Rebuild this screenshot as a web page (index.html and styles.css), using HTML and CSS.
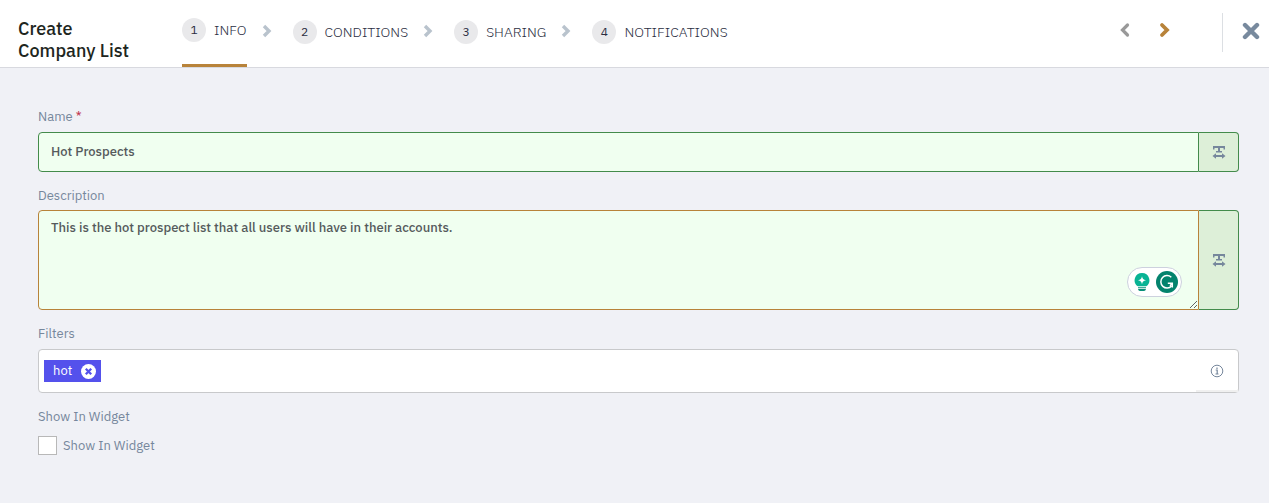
FILE: index.html
```html
<!DOCTYPE html>
<html lang="en">
<head>
<meta charset="utf-8">
<meta name="viewport" content="width=device-width, initial-scale=1">
<title>Create Company List</title>
<link rel="stylesheet" href="styles.css">
</head>
<body>
<svg class="sprite" aria-hidden="true">
  <symbol id="chevron" viewBox="0 0 10 14"><path d="M2 2l5 5-5 5" fill="none" stroke="currentColor" stroke-width="3.4"/></symbol>
  <symbol id="text-width" viewBox="0 0 14 14"><path fill="currentColor" d="M1 1h12v3.500h-1.500V3H8v3h2v1.500H4V6h2V3H2.500v1.500H1zM.5 11L4 8.300V10h6V8.300L13.500 11 10 13.700V12H4v1.700z"/></symbol>
</svg>
<header class="header">
  <h1 class="title">Create Company List</h1>
  <nav class="steps" aria-label="Steps">
    <button class="step step-active" type="button"><span class="num">1</span><span>INFO</span></button>
    <svg class="sep"><use href="#chevron"/></svg>
    <button class="step" type="button"><span class="num">2</span><span>CONDITIONS</span></button>
    <svg class="sep"><use href="#chevron"/></svg>
    <button class="step" type="button"><span class="num">3</span><span>SHARING</span></button>
    <svg class="sep"><use href="#chevron"/></svg>
    <button class="step" type="button"><span class="num">4</span><span>NOTIFICATIONS</span></button>
  </nav>
  <div class="actions">
    <button class="nav-button prev" type="button" aria-label="Previous"><svg width="12" height="16" viewBox="0 0 12 16"><path d="M8.500 3L3.500 8l5 5" fill="none" stroke="currentColor" stroke-width="3.200" stroke-linecap="round"/></svg></button>
    <button class="nav-button next" type="button" aria-label="Next"><svg width="12" height="16" viewBox="0 0 12 16"><path d="M3 3l5 5-5 5" fill="none" stroke="currentColor" stroke-width="3.800" stroke-linecap="round"/></svg></button>
    <button class="close" type="button" aria-label="Close"><svg width="18" height="18" viewBox="0 0 18 18"><path d="M3 3l12 12M15 3L3 15" fill="none" stroke="currentColor" stroke-width="4.400" stroke-linecap="round"/></svg></button>
  </div>
</header>
<main>
<form class="form">
  <div class="field">
    <label class="label" for="name">Name <span class="required">*</span></label>
    <div class="group">
      <input class="control" id="name" type="text" value="Hot Prospects">
      <button class="addon" type="button" aria-label="Insert text"><svg width="14" height="14"><use href="#text-width"/></svg></button>
    </div>
  </div>
  <div class="field">
    <label class="label label-area" for="description">Description</label>
    <div class="group">
      <textarea class="control area" id="description" spellcheck="false">This is the hot prospect list that all users will have in their accounts.</textarea>
      <button class="addon" type="button" aria-label="Insert text"><svg width="14" height="14"><use href="#text-width"/></svg></button>
      <div class="assistant" aria-hidden="true">
        <svg width="16" height="20" viewBox="0 0 16 20"><path d="M8 1a7.300 7.300 0 0 0-4.200 13.300h8.400A7.300 7.300 0 0 0 8 1z" fill="#08b394"/><path d="M8 4.200c.6 2.700 1.300 3.400 4 4-2.700.6-3.400 1.300-4 4-.6-2.700-1.300-3.400-4-4 2.700-.6 3.400-1.300 4-4z" fill="#fff"/><path d="M4 15.300h8v1H4zM4 17h8q-.4 2-2 2H6q-1.600 0-2-2z" fill="#078f78"/></svg>
        <svg width="22" height="22" viewBox="0 0 22 22"><circle cx="11" cy="11" r="11" fill="#04836d"/><path d="M15.300 6.300A6.200 6.200 0 1 0 15.600 15" fill="none" stroke="#fff" stroke-width="1.500"/><path d="M11.800 12.200H16.300V16.500M16.300 12.200l-2.300 2.500" fill="none" stroke="#fff" stroke-width="1.500"/></svg>
      </div>
    </div>
  </div>
  <div class="field">
    <label class="label" for="filters">Filters</label>
    <div class="filter-box">
      <span class="tag">hot <button class="remove" type="button" aria-label="Remove hot"><svg width="15" height="15" viewBox="0 0 15 15"><circle cx="7.500" cy="7.500" r="7.500" fill="#fff"/><path d="M4.800 4.800l5.400 5.400M10.200 4.800l-5.400 5.400" stroke="#5451ec" stroke-width="2.300"/></svg></button></span>
      <input class="filter-input" id="filters" type="text">
      <span class="info"><svg width="14" height="14" viewBox="0 0 14 14"><circle cx="7" cy="7" r="5.800" fill="none" stroke="currentColor"/><path d="M7 3.500v1.500M5.700 6h1.500v4M5.500 10h3" fill="none" stroke="currentColor" stroke-width="1.200"/></svg></span>
    </div>
  </div>
  <fieldset class="checks">
    <legend class="label">Show In Widget</legend>
    <input class="checkbox" id="widget" type="checkbox">
    <label for="widget">Show In Widget</label>
  </fieldset>
</form>
</main>
</body>
</html>
```
FILE: styles.css
```css
* { box-sizing: border-box; }
body {
  margin: 0;
  min-height: 100vh;
  background: #f0f1f6;
  color: #76879c;
  font: 13px/18px "IBM Plex Sans", Roboto, sans-serif;
}
button, input, textarea { font: inherit; color: inherit; margin: 0; }
button { padding: 0; border: 0; background: none; cursor: pointer; }
svg { display: block; }
.sprite { position: absolute; width: 0; height: 0; }
.header {
  display: flex;
  min-height: 68px;
  padding-left: 18px;
  background: #fff;
  border-bottom: 1px solid #d8d9df;
}
.title {
  flex: 0 0 164px;
  margin: 0;
  padding: 18px 48px 0 0;
  color: #202520;
  font-size: 18px;
  line-height: 22px;
  font-weight: 500;
}
.steps { display: flex; flex: 1; }
.step {
  display: flex;
  align-items: center;
  gap: 8px;
  padding-bottom: 4px;
  color: #2b2e42;
  font-size: 14px;
  font-weight: 300;
}
.step-active { border-bottom: 3px solid #b8833a; }
.num {
  width: 24px;
  border-radius: 12px;
  background: #e9e9eb;
  font-size: 12px;
  font-weight: 400;
  line-height: 24px;
}
.sep { width: 10px; height: 14px; margin: 24px 21px 0 15px; color: #b9c3cd; }
.actions { display: flex; align-items: flex-start; padding-top: 13px; }
.nav-button { padding: 9px 14px; }
.prev { color: #999; }
.next { color: #b8833a; }
.close {
  margin-left: 37px;
  height: 39px;
  padding: 0 9px 4px 19px;
  border-left: 1px solid #dcdfe3;
  color: #788a9e;
}
.form { padding: 40px 30px 40px 38px; }
.field { margin-bottom: 15px; }
.label { display: block; padding: 0; margin-bottom: 6px; }
.label-area { margin-bottom: 5px; }
.required { color: #c1314d; }
.group { position: relative; display: flex; }
.control {
  flex: 1;
  min-width: 0;
  height: 40px;
  padding: 0 12px 2px;
  border: 1px solid #438b4b;
  border-radius: 4px 0 0 4px;
  outline: 0;
  background: #f0fff0;
  color: #555a5c;
  font-weight: 500;
}
.area { height: 100px; padding: 8px 12px; border-color: #b8833a; resize: vertical; }
.addon {
  display: grid;
  place-items: center;
  width: 40px;
  border: 1px solid #438b4b;
  border-left: 0;
  border-radius: 0 4px 4px 0;
  background: #ddefd8;
}
.assistant {
  position: absolute;
  right: 57px;
  bottom: 13px;
  display: flex;
  align-items: center;
  gap: 6px;
  height: 30px;
  padding: 0 3px 0 6px;
  border: 1px solid #cdd1de;
  border-radius: 15px;
  background: #fff;
}
.filter-box {
  display: flex;
  align-items: center;
  min-height: 44px;
  padding-left: 5px;
  border: 1px solid #c8c9cb;
  border-radius: 4px;
  background: #fff;
}
.tag {
  display: flex;
  align-items: center;
  gap: 9px;
  height: 22px;
  padding: 0 5px 0 9px;
  background: #5451ec;
  color: #fff;
}
.filter-input { flex: 1; min-width: 0; border: 0; outline: 0; background: none; }
.info {
  display: grid;
  place-items: center;
  align-self: stretch;
  width: 42px;
  border-bottom: 2px solid #f0f0f0;
  padding-top: 2px;
}
.checks { display: flex; align-items: center; gap: 6px; margin: 0; padding: 0; border: 0; }
.checks .label { margin-bottom: 10px; }
.checkbox {
  appearance: none;
  width: 19px;
  height: 19px;
  border: 1px solid #b8b8b8;
  background: #fff;
}
```
